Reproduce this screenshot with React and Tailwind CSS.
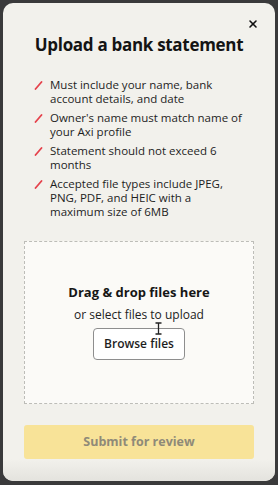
import { X } from 'lucide-react'

const RULES = [
  ['Must include your name, bank', 'account details, and date'],
  ["Owner's name must match name of", 'your Axi profile'],
  ['Statement should not exceed 6', 'months'],
  ['Accepted file types include JPEG,', 'PNG, PDF, and HEIC with a', 'maximum size of 6MB'],
]

function Slash() {
  return (
    <svg width="9" height="9" viewBox="0 0 9 9" className="mt-[3px] shrink-0">
      <path d="M1.5 8 L7.5 1" stroke="#e5434c" strokeWidth="1.8" strokeLinecap="round" />
    </svg>
  )
}

export default function App() {
  return (
    <div className="w-[278px] h-[485px] bg-[#3a3a3b] p-[3px] pb-[4px]" style={{ fontFamily: '"Open Sans", "Noto Sans", sans-serif' }}>
      <div className="relative h-full rounded-[10px] bg-[#f2f1ec] flex flex-col overflow-hidden">
        <button className="absolute right-[16px] top-[15px] text-[#111]">
          <X size={12} strokeWidth={3.2} />
        </button>

        <h1 className="mt-[31px] text-center text-[17px] leading-[22px] font-bold text-[#141414] tracking-[-0.3px]">
          Upload a bank statement
        </h1>

        <ul className="mt-[22px] pl-[31px] pr-[20px] flex flex-col gap-[5px]">
          {RULES.map(lines => (
            <li key={lines[0]} className="flex gap-[7px] text-[11.5px] leading-[14px] text-[#1e1e1e]">
              <Slash />
              <span className="flex flex-col whitespace-nowrap">
                {lines.map(l => <span key={l}>{l}</span>)}
              </span>
            </li>
          ))}
        </ul>

        <div className="relative mx-[21px] mt-[22px] h-[164px] border border-dashed border-[#bdbdb8] bg-[#fbfaf7] flex flex-col items-center pt-[41px]">
          <p className="text-[13px] leading-[18px] font-bold text-[#161616]">Drag &amp; drop files here</p>
          <p className="mt-[6px] text-[12px] leading-[16px] text-[#222]">or select files to upload</p>
          <button className="mt-[5px] w-[92px] h-[32px] rounded-[4px] border border-[#8e8e8e] bg-white text-[12px] font-semibold text-[#1e1e1e]">
            Browse files
          </button>
          <svg width="7" height="13" viewBox="0 0 7 13" className="absolute left-[130px] top-[80px]">
            <path d="M0.5 1h6M3.5 1v11M0.5 12h6" stroke="#222" strokeWidth="1.3" fill="none" />
          </svg>
        </div>

        <button className="mx-[21px] mt-[21px] h-[34px] rounded-[3px] bg-[#f8e398] text-[12.5px] font-bold text-[#8f8a78]">
          Submit for review
        </button>

        <div className="mt-auto h-[22px] bg-gradient-to-b from-[#f2f1ec] to-[#e4e3de]" />
      </div>
    </div>
  )
}
